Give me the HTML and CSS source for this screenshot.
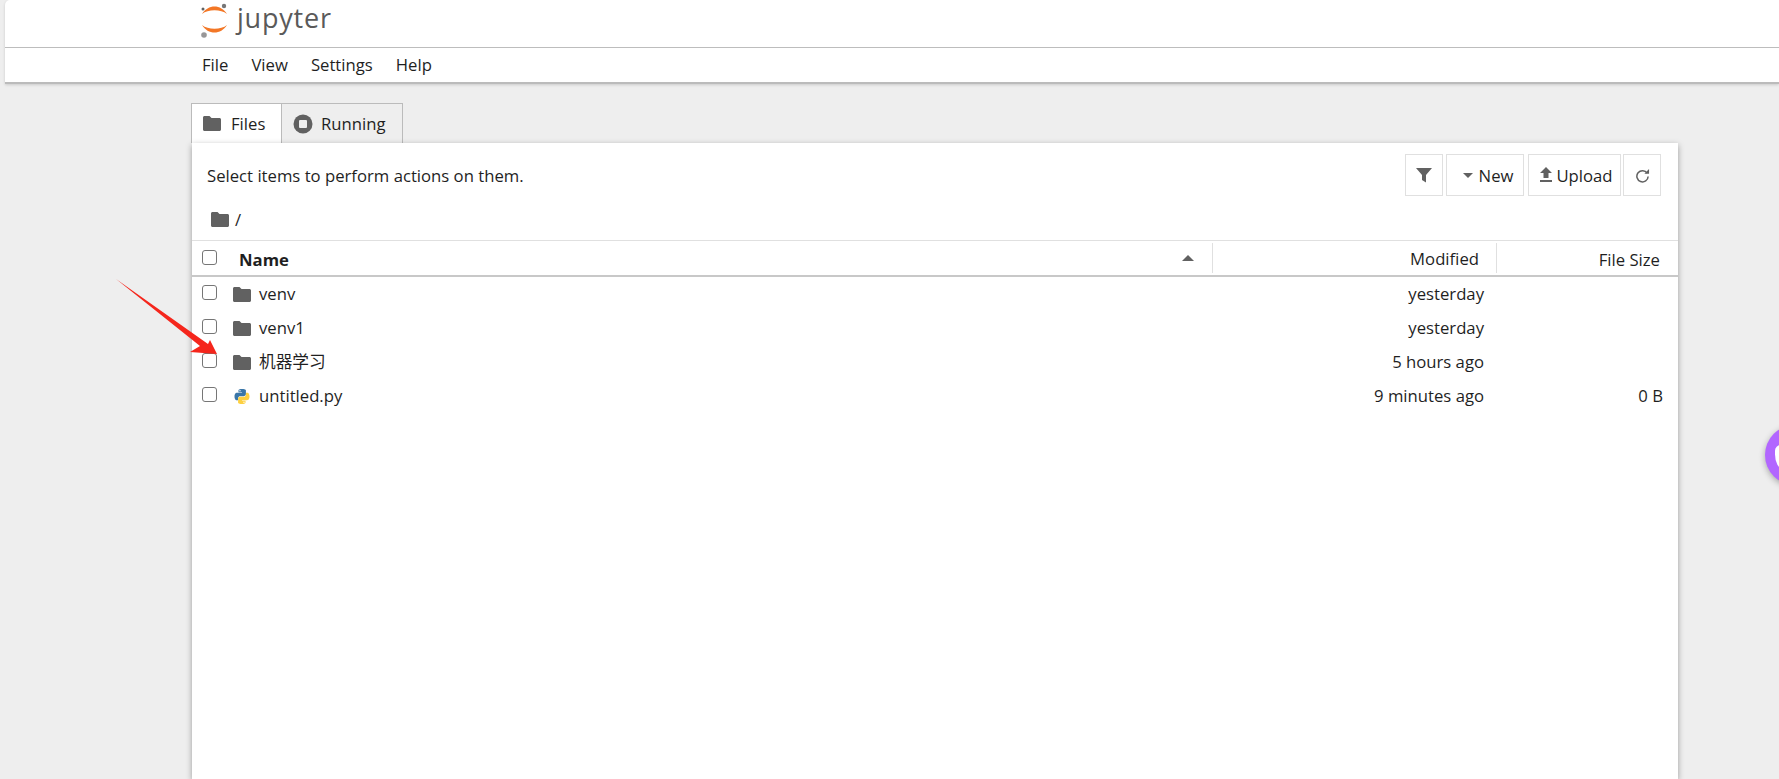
FILE: index.html
```html
<!DOCTYPE html>
<html lang="en">

<head>
    <meta charset="UTF-8">
    <title>Home</title>
    <link rel="stylesheet" href="styles.css">
</head>

<body>
    <svg width="0" height="0" class="defs">
        <symbol id="folder" viewBox="0 0 18 15">
            <path d="M1.5 0H6.5L8.5 2H16.5C17.3 2 18 2.7 18 3.5V13.5C18 14.3 17.3 15 16.5 15H1.5C.7 15 0 14.3 0 13.5V1.5C0 .7 .7 0 1.5 0Z" />
        </symbol>
    </svg>

    <header class="top">
        <div class="logoBar">
            <svg class="logo" width="29" height="38" viewBox="0 0 29 38">
                <path d="M2 14C8 4 21 4 27 14C21 9 8 9 2 14Z" fill="#f37726" />
                <path d="M2 25C8 35 21 35 27 25C21 30 8 30 2 25Z" fill="#f37726" />
                <circle cx="24" cy="6" r="2.200" fill="#767677" />
                <circle cx="3" cy="9" r="1.500" fill="#616262" />
                <circle cx="4" cy="35" r="2.800" fill="#989798" />
            </svg>
            <span class="logoText">jupyter</span>
        </div>
        <nav class="menuBar">
            <a href="#">File</a>
            <a href="#">View</a>
            <a href="#">Settings</a>
            <a href="#">Help</a>
        </nav>
    </header>

    <main class="content">
        <div class="tabs">
            <div class="tab active">
                <svg class="icon"><use href="#folder" /></svg>
                Files
            </div>
            <div class="tab">
                <svg class="icon" viewBox="0 0 20 20">
                    <circle cx="10" cy="10" r="9.500" fill="#616161" />
                    <rect x="6" y="6" width="8" height="8" rx="1" fill="#eee" />
                </svg>
                Running
            </div>
        </div>

        <section class="panel">
            <div class="toolbar">
                <span class="hint">Select items to perform actions on them.</span>
                <div class="buttons">
                    <button class="btn iconBtn">
                        <svg width="16" height="16" viewBox="0 0 16 16"><path d="M0 1H16L10 8V15.500L6 13V8Z" fill="#616161" /></svg>
                    </button>
                    <button class="btn newBtn">
                        <svg width="10" height="5" viewBox="0 0 10 5"><path d="M0 0H10L5 5Z" fill="#616161" /></svg>
                        New
                    </button>
                    <button class="btn uploadBtn">
                        <svg width="14" height="16" viewBox="0 0 14 16"><path d="M7 0L13 6H9.500V11H4.500V6H1ZM1 13H13V15H1Z" fill="#616161" /></svg>
                        Upload
                    </button>
                    <button class="btn iconBtn">
                        <svg width="15" height="15" viewBox="0 0 16 16"><path d="M13 5.500A6 6 0 1 0 14 9" fill="none" stroke="#616161" stroke-width="1.600" /><path d="M10 6H15V1Z" fill="#616161" /></svg>
                    </button>
                </div>
            </div>

            <div class="crumb">
                <svg class="icon"><use href="#folder" /></svg>
                <span>/</span>
            </div>

            <div class="listHead">
                <input type="checkbox" class="check">
                <span class="headName">Name</span>
                <span class="sortArrow"></span>
                <span class="headMod">Modified</span>
                <span class="headSize">File Size</span>
            </div>

            <div class="row">
                <input type="checkbox" class="check">
                <svg class="icon"><use href="#folder" /></svg>
                <span class="name">venv</span>
                <span class="mod">yesterday</span>
                <span class="size"></span>
            </div>
            <div class="row">
                <input type="checkbox" class="check">
                <svg class="icon"><use href="#folder" /></svg>
                <span class="name">venv1</span>
                <span class="mod">yesterday</span>
                <span class="size"></span>
            </div>
            <div class="row">
                <input type="checkbox" class="check">
                <svg class="icon"><use href="#folder" /></svg>
                <span class="name">机器学习</span>
                <span class="mod">5 hours ago</span>
                <span class="size"></span>
            </div>
            <div class="row">
                <input type="checkbox" class="check">
                <svg class="icon" viewBox="0 0 18 18">
                    <path d="M8.900 0C4.500 0 4.800 1.900 4.800 1.900V4H9V4.600H3.100S0 4.300 0 9S2.700 13.500 2.700 13.500H4.300V11.300S4.200 8.600 7 8.600H11.100S13.700 8.700 13.700 6.100V1.900S14.100 0 8.900 0ZM6.600 1.300A.8 .8 0 1 1 6.600 2.900A.8 .8 0 1 1 6.600 1.300Z" fill="#3a76a8" />
                    <path d="M9.100 18C13.500 18 13.200 16.100 13.200 16.100V14H9V13.400H14.900S18 13.700 18 9S15.300 4.500 15.300 4.500H13.700V6.700S13.800 9.400 11 9.400H6.900S4.300 9.300 4.300 11.900V16.100S3.900 18 9.100 18ZM11.400 16.700A.8 .8 0 1 1 11.400 15.100A.8 .8 0 1 1 11.400 16.700Z" fill="#fdd040" />
                </svg>
                <span class="name">untitled.py</span>
                <span class="mod">9 minutes ago</span>
                <span class="size">0 B</span>
            </div>
        </section>
    </main>

    <!-- red annotation arrow drawn over the list -->
    <svg class="arrow" width="104" height="78" viewBox="0 0 104 78">
        <path d="M0 0L92 65L94 61L101 75L74 73L84 67Z" fill="#f5261c" />
    </svg>

    <div class="floatBall"><span class="ballMark"></span></div>
</body>

</html>
```

FILE: styles.css
```css
* {
    box-sizing: border-box;
}

html,
body {
    height: 100%;
    margin: 0;
}

body {
    font-family: "Open Sans", "Noto Sans CJK SC", sans-serif;
    font-size: 16.7px;
    color: #1f1f1f;
    background-color: #eee;
    padding-left: 5px;
    overflow: hidden;
    display: flex;
    flex-direction: column;
}

.defs {
    position: absolute;
}

.icon {
    width: 18px;
    height: 15px;
    fill: #616161;
    flex-shrink: 0;
}

.top {
    background-color: #fff;
    border-top-left-radius: 5px;
    border-bottom: 2px solid #bbb;
    box-shadow: 0 1px 3px rgba(0, 0, 0, 0.15);
}

.logoBar {
    height: 48px;
    padding-left: 195px;
    display: flex;
    align-items: flex-start;
    border-bottom: 1px solid #bdbdbd;
}

.logo {
    flex-shrink: 0;
}

.logoText {
    font-family: "Open Sans", sans-serif;
    font-size: 27px;
    line-height: 36px;
    margin-left: 8px;
    color: #5a5a5a;
    letter-spacing: 0.8px;
}

.menuBar {
    height: 34px;
    padding: 0 0 2px 197px;
    display: flex;
    align-items: center;
    gap: 23px;
}

.menuBar a {
    color: #1f1f1f;
    text-decoration: none;
}

.content {
    flex: 1;
    padding: 19px 101px 0 187px;
    display: flex;
    flex-direction: column;
}

.tabs {
    display: flex;
    height: 40px;
    margin-left: -1px;
}

.tab {
    display: flex;
    align-items: center;
    gap: 8px;
    padding: 0 16px 0 11px;
    border: 1px solid #bbb;
    border-bottom: none;
}

.tab .icon {
    width: 20px;
    height: 20px;
}

.tab.active {
    background-color: #fff;
    width: 90px;
    gap: 10px;
    border-right: none;
}

.tab.active .icon {
    width: 18px;
    height: 15px;
}

.panel {
    flex: 1;
    background-color: #fff;
    box-shadow: 0 2px 6px rgba(0, 0, 0, 0.35);
    position: relative;
}

.toolbar {
    display: flex;
    justify-content: space-between;
    align-items: center;
    padding: 11px 17px 0 15px;
    height: 53px;
}

.buttons {
    display: flex;
    gap: 3px;
}

.btn {
    height: 42px;
    font: inherit;
    color: inherit;
    background-color: #fff;
    border: 1px solid #e0e0e0;
    display: flex;
    align-items: center;
    justify-content: center;
    gap: 6px;
}

.iconBtn {
    width: 38px;
    padding: 0;
}

.newBtn {
    width: 78px;
    margin-right: 1px;
    padding: 0 0 0 6px;
}

.uploadBtn {
    width: 93px;
    margin-right: -1px;
    padding: 0 0 0 3px;
    gap: 3px;
}

.crumb {
    height: 44px;
    padding: 2px 0 0 19px;
    display: flex;
    align-items: center;
    gap: 6px;
}

.listHead {
    height: 37px;
    border-top: 1px solid #e0e0e0;
    border-bottom: 2px solid #c8c8c8;
    display: flex;
    align-items: center;
    padding-left: 10px;
}

.check {
    appearance: none;
    width: 15px;
    height: 15px;
    margin: 0;
    flex-shrink: 0;
    background-color: #fff;
    border: 1.5px solid #767676;
    border-radius: 3px;
    position: relative;
    top: -2px;
}

.listHead .check {
    top: -1px;
}

.headName {
    font-weight: 700;
    margin-left: 22px;
    padding-top: 2px;
    flex: 1;
}

.sortArrow {
    width: 0;
    height: 0;
    border-left: 6px solid transparent;
    border-right: 6px solid transparent;
    border-bottom: 6px solid #616161;
    margin-right: 18px;
    position: relative;
}

.headMod {
    width: 285px;
    height: 30px;
    line-height: 32px;
    text-align: right;
    padding-right: 17px;
    border-left: 1px solid #e0e0e0;
    border-right: 1px solid #e0e0e0;
}

.headSize {
    width: 181px;
    padding: 2px 18px 0 0;
    text-align: right;
}

.row {
    height: 34px;
    display: flex;
    align-items: center;
    padding-left: 10px;
}

.row .icon {
    margin-left: 16px;
}

.name {
    flex: 1;
    margin-left: 8px;
    padding-bottom: 2px;
}

.mod {
    text-align: right;
    width: 284px;
    padding: 0 13px 2px 0;
}

.size {
    width: 181px;
    text-align: right;
    padding: 0 15px 2px 0;
}

.arrow {
    position: absolute;
    left: 116px;
    top: 279px;
}

.floatBall {
    position: absolute;
    left: 1765px;
    top: 425px;
    width: 60px;
    height: 60px;
    border-radius: 50%;
    background-color: #b266ff;
    box-shadow: 0 2px 6px rgba(0, 0, 0, 0.3);
}

.ballMark {
    position: absolute;
    left: 10px;
    top: 20px;
    width: 14px;
    height: 24px;
    border-radius: 7px 7px 7px 10px / 7px 7px 7px 18px;
    background-color: #fff;
}
```
